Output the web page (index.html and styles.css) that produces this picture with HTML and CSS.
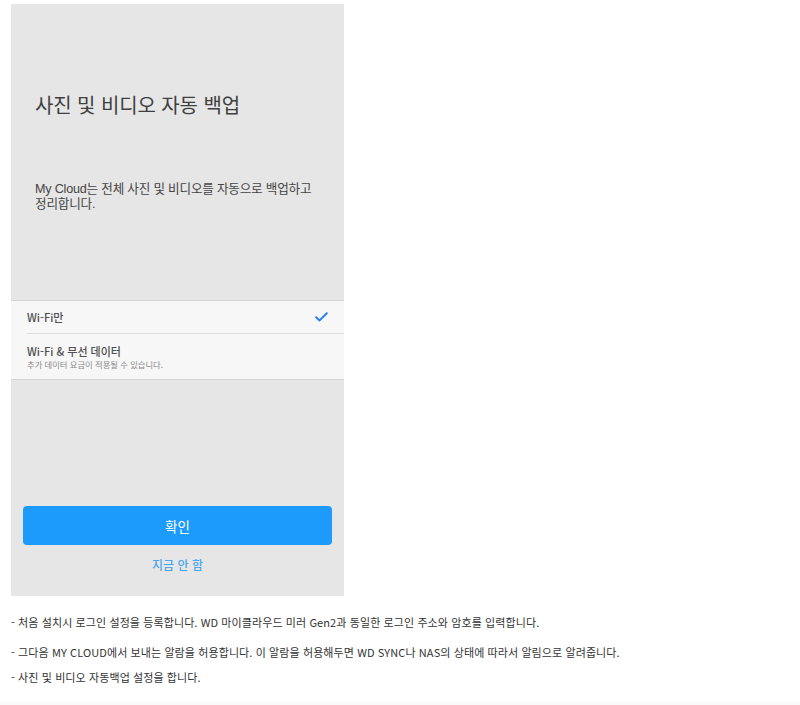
FILE: index.html
```html
<!DOCTYPE html>
<html lang="ko">
<head>
<meta charset="utf-8">
<title>사진 및 비디오 자동 백업</title>
<link rel="stylesheet" href="styles.css">
</head>
<body>
<div class="page">
  <div class="phone">
    <h1 class="title">사진 및 비디오 자동 백업</h1>
    <p class="desc">My Cloud는 전체 사진 및 비디오를 자동으로 백업하고<br>정리합니다.</p>
    <ul class="options">
      <li class="option option-first">
        <span class="opt-label">Wi-Fi만</span>
        <svg class="check" width="13" height="10" viewBox="0 0 13 10"><path d="M1.2 5.2 L4.6 8.4 L11.8 1.2" fill="none" stroke="#2a7ef0" stroke-width="2" stroke-linecap="round" stroke-linejoin="round"/></svg>
      </li>
      <li class="option option-second">
        <span class="opt-label">Wi-Fi &amp; 무선 데이터</span>
        <span class="opt-sub">추가 데이터 요금이 적용될 수 있습니다.</span>
      </li>
    </ul>
    <div class="actions">
      <button class="confirm">확인</button>
      <a class="later">지금 안 함</a>
    </div>
  </div>
  <p class="note note1">- 처음 설치시 로그인 설정을 등록합니다. WD 마이클라우드 미러 Gen2과 동일한 로그인 주소와 암호를 입력합니다.</p>
  <p class="note note2">- 그다음 MY CLOUD에서 보내는 알람을 허용합니다. 이 알람을 허용해두면 WD SYNC나 NAS의 상태에 따라서 알림으로 알려줍니다.</p>
  <p class="note note3">- 사진 및 비디오 자동백업 설정을 합니다.</p>
</div>
<div class="footer-band"></div>
</body>
</html>
```
FILE: styles.css
```css
html, body {
  margin: 0;
  padding: 0;
  background: #ffffff;
}
body {
  font-family: "Noto Sans CJK KR", "Noto Sans", "Liberation Sans", sans-serif;
  height: 705px;
  overflow: hidden;
  position: relative;
}
.page {
  padding: 4px 0 0 11px;
}
.phone {
  width: 333px;
  height: 592px;
  background: #e6e6e6;
  display: flex;
  flex-direction: column;
  box-sizing: border-box;
}
.title {
  margin: 89px 0 0 24px;
  font-size: 20px;
  line-height: 24px;
  font-weight: 400;
  color: #3f3f3f;
  letter-spacing: -0.1px;
}
.desc {
  margin: 65px 0 0 24px;
  font-family: "Liberation Sans", "Noto Sans CJK KR", sans-serif;
  font-size: 12.6px;
  line-height: 15px;
  color: #444;
  letter-spacing: -0.2px;
}
.options {
  list-style: none;
  margin: 0;
  padding: 0;
  margin-top: 88px;
  background: #f7f7f7;
  border-top: 1px solid #d4d4d4;
  border-bottom: 1px solid #d4d4d4;
}
.option {
  margin-left: 16px;
  padding-right: 16px;
  display: flex;
  flex-direction: column;
  justify-content: center;
  position: relative;
}
.option-first {
  height: 32px;
  border-bottom: 1px solid #dcdcdc;
}
.option-second {
  height: 45px;
}
.opt-label {
  font-size: 11px;
  line-height: 13px;
  font-weight: 500;
  color: #505050;
}
.opt-sub {
  font-size: 8.3px;
  line-height: 10px;
  color: #8a8a8a;
  margin-top: 1px;
}
.check {
  position: absolute;
  right: 16px;
  top: 11px;
}
.actions {
  margin-top: auto;
  padding: 0 12px 23px 12px;
  display: flex;
  flex-direction: column;
  align-items: center;
}
.confirm {
  width: 309px;
  height: 39px;
  border: none;
  border-radius: 4px;
  background: #1d9bfd;
  color: #ffffff;
  font-family: inherit;
  font-size: 13.5px;
  font-weight: 400;
  padding: 0;
}
.later {
  margin-top: 12px;
  font-size: 12px;
  line-height: 16px;
  color: #49a7ef;
  font-weight: 500;
}
.note {
  margin: 0;
  font-size: 11px;
  line-height: 16px;
  color: #333;
  letter-spacing: 0.1px;
}
.note1 { margin-top: 18px; }
.note2 { margin-top: 14px; }
.note3 { margin-top: 9px; }
.footer-band {
  position: absolute;
  left: 0;
  right: 0;
  bottom: 0;
  height: 3px;
  background: #fafafa;
}
```
